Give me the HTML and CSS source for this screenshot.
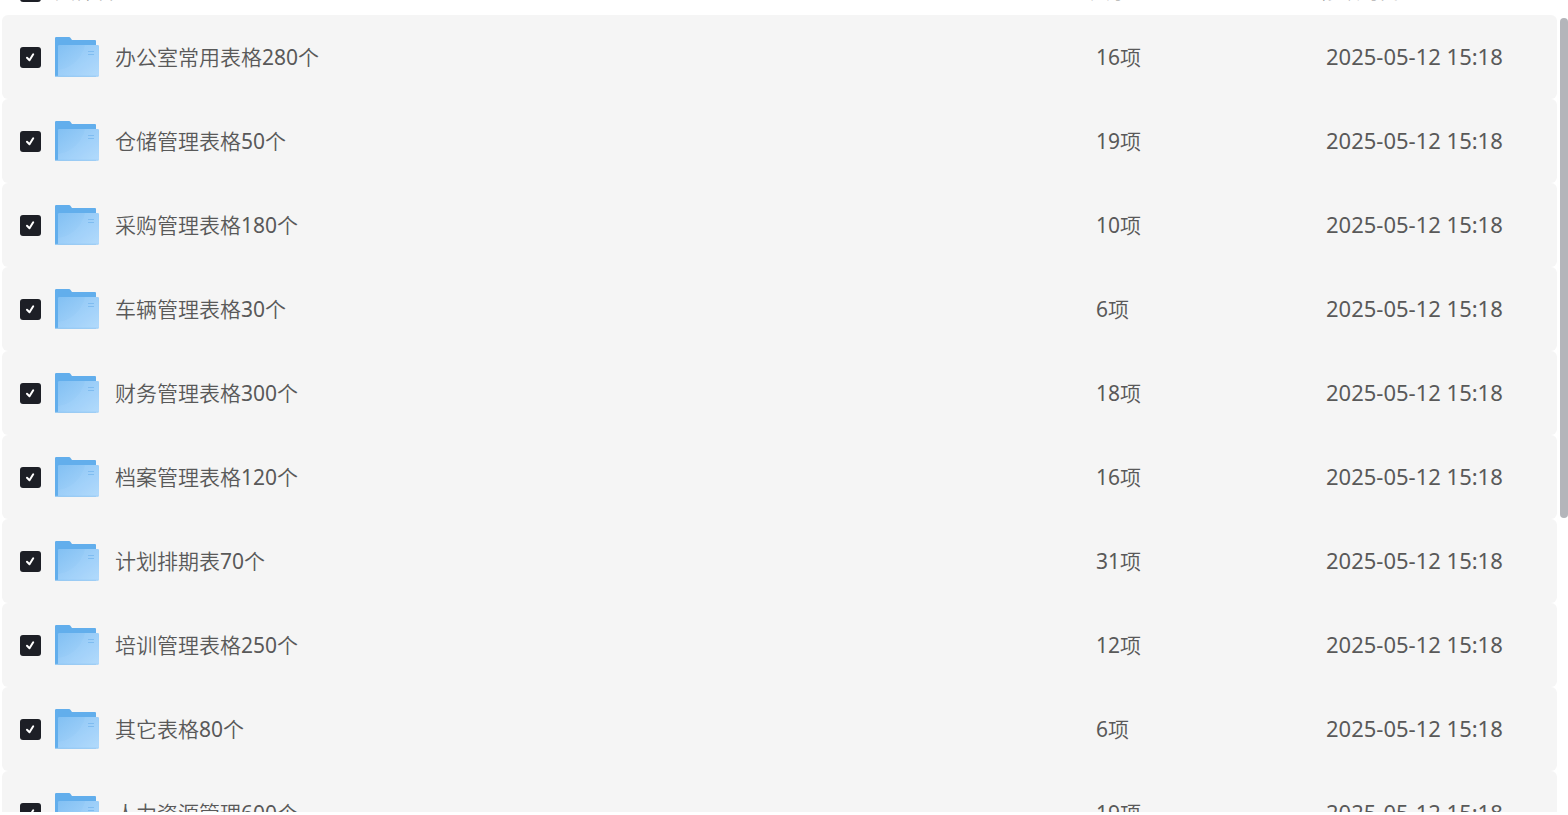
FILE: index.html
```
<!DOCTYPE html>
<html lang="zh-CN">
<head>
  <meta charset="UTF-8">
  <meta name="viewport" content="width=device-width, initial-scale=1.0">
  <title>文件列表</title>
  <link rel="stylesheet" href="styles.css">
</head>
<body>
  <!-- Folder icon, reused by every row -->
  <svg class="sprite" aria-hidden="true">
    <defs>
      <linearGradient id="front" x1="0" y1="0" x2="1" y2="1">
        <stop offset="0" stop-color="#82c0f3"/>
        <stop offset="1" stop-color="#b2dafc"/>
      </linearGradient>
    </defs>
    <symbol id="folder" viewBox="0 0 44 40">
      <path d="M0 1.2Q0 0 1.2 0H14Q15 0 15.6 .9L17 3H40Q41 3 41 4V39.5H0Z" fill="#62aeec"/>
      <rect x="3" y="8" width="41" height="31.5" rx="1.2" fill="url(#front)"/>
      <path d="M3 33Q25 29 30 8H43V39H3Z" fill="#b5dcff" opacity=".15"/>
      <path d="M0 39.2H43.5" stroke="#8ac5f5" stroke-width=".6"/>
      <path d="M33 14.5H39M33 17.5H39" stroke="#7fbcf0" stroke-width="1"/>
    </symbol>
  </svg>
  <main class="file-list">
    <table class="files">
      <thead>
        <tr>
          <th class="name"><div class="cell"><input type="checkbox" class="check" aria-label="全选" checked><span>文件名</span></div></th>
          <th class="size"><div class="cell"><span>大小</span></div></th>
          <th class="date"><div class="cell"><span>修改时间</span></div></th>
        </tr>
      </thead>
      <tbody id="rows"></tbody>
    </table>
    <div class="scrollbar"><div class="thumb"></div></div>
  </main>
  <script>
    const folders = [
      { name: "办公室常用表格", total: 280, count: 16 },
      { name: "仓储管理表格", total: 50, count: 19 },
      { name: "采购管理表格", total: 180, count: 10 },
      { name: "车辆管理表格", total: 30, count: 6 },
      { name: "财务管理表格", total: 300, count: 18 },
      { name: "档案管理表格", total: 120, count: 16 },
      { name: "计划排期表", total: 70, count: 31 },
      { name: "培训管理表格", total: 250, count: 12 },
      { name: "其它表格", total: 80, count: 6 },
      { name: "人力资源管理", total: 600, count: 19 },
    ];

    document.getElementById("rows").innerHTML = folders.map((f, i) => `
      <tr>
        <td class="name">
          <div class="cell">
            <input type="checkbox" class="check" id="f${i}" checked>
            <svg class="folder" aria-hidden="true"><use href="#folder"/></svg>
            <label for="f${i}">${f.name}<span class="num">${f.total}</span>个</label>
          </div>
        </td>
        <td class="size"><span class="num">${f.count}</span>项</td>
        <td class="date"><span class="num">2025-05-12 15:18</span></td>
      </tr>`).join("");
  </script>
</body>
</html>
```
FILE: styles.css
```
* {
  box-sizing: border-box;
}
body {
  margin: 0;
  height: 100vh;
  overflow: hidden;
  background-color: #ffffff;
  color: #595959;
  font-family: "Noto Sans", "Noto Sans CJK SC", sans-serif;
  font-size: 21px;
  line-height: 28px;
}
.sprite {
  position: absolute;
  width: 0;
  height: 0;
}
.file-list {
  display: flex;
  gap: 3px;
  height: calc(100vh - 3px);
  padding-left: 2px;
  overflow: hidden;
}
.files {
  flex: 1;
  align-self: flex-start;
  table-layout: fixed;
  border-collapse: separate;
  border-spacing: 0;
}
th, td {
  padding: 0;
  text-align: left;
  font-weight: 350;
}
/* Header is scrolled almost out of view */
th .cell {
  display: flex;
  align-items: flex-end;
  gap: 14px;
  height: 15px;
  padding-bottom: 13px;
  color: #8c8c8c;
  font-size: 20px;
  line-height: 20px;
}
td {
  height: 84px;
  background-color: #f5f5f5;
}
td .cell {
  display: flex;
  align-items: center;
}
.name .cell {
  padding-left: 18px;
}
td.name {
  border-radius: 6px 0 0 6px;
}
.size {
  width: 230px;
}
.date {
  width: 237px;
}
td.size, td.date {
  padding-left: 6px;
}
td.date {
  padding-bottom: 2px;
  border-radius: 0 6px 6px 0;
  font-size: 22px;
}
.num {
  font-weight: 400;
}
.check {
  appearance: none;
  flex: none;
  width: 21px;
  height: 21px;
  margin: 0;
  border-radius: 3px;
  background: #1d1f26 url("data:image/svg+xml,%3Csvg xmlns='http://www.w3.org/2000/svg' viewBox='0 0 21 21'%3E%3Cpath d='M7 10.8L9.5 13.3L13.2 7.3' fill='none' stroke='white' stroke-width='2' stroke-linecap='round' stroke-linejoin='round'/%3E%3C/svg%3E") center / 21px 21px no-repeat;
}
.folder {
  width: 44px;
  height: 40px;
  margin: 0 16px 0 14px;
}
.name label {
  line-height: 30px;
}
.scrollbar {
  flex: none;
  width: 8px;
  padding-top: 18px;
}
.thumb {
  height: 63%;
  border-radius: 4px;
  background-color: #b4b5ba;
}
```
